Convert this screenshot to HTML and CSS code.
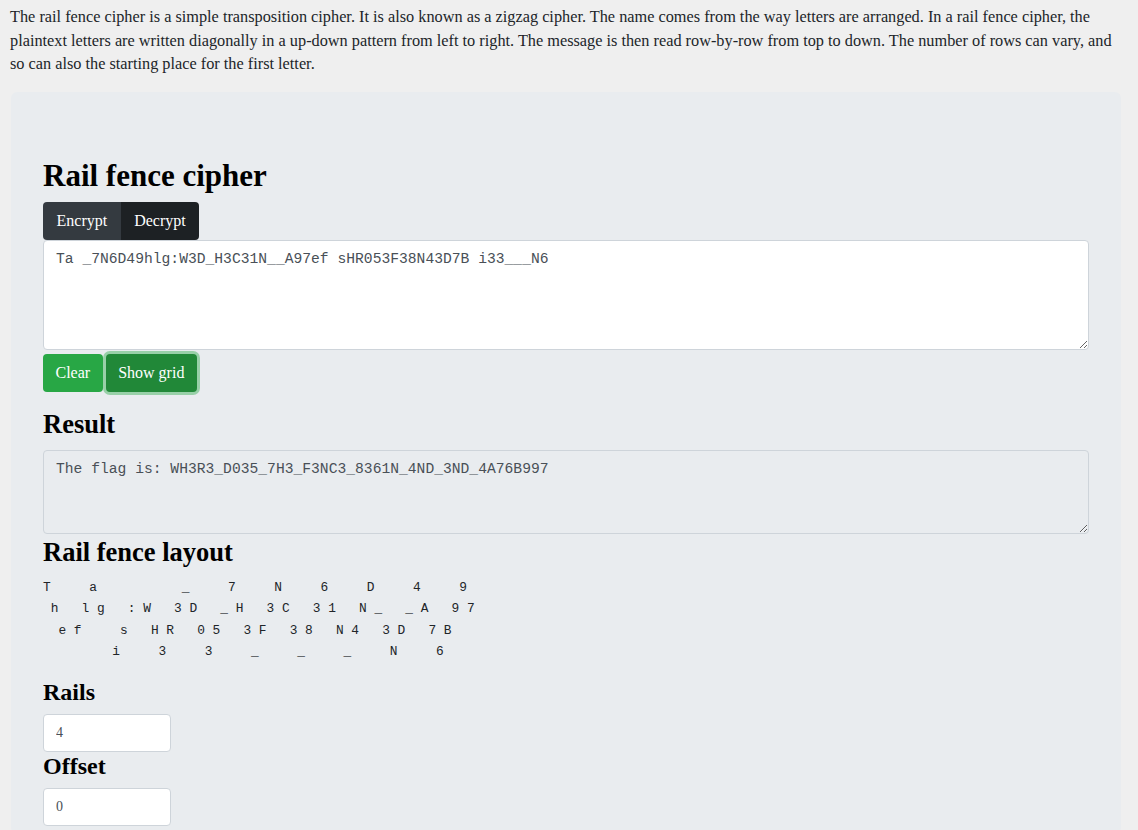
FILE: index.html
```html
<!DOCTYPE html>
<html lang="en">
<head>
<meta charset="utf-8">
<title>Rail fence cipher</title>
<link rel="stylesheet" href="styles.css">
</head>
<body>
<p class="intro">The rail fence cipher is a simple transposition cipher. It is also known as a zigzag cipher. The name comes from the way letters are arranged. In a rail fence cipher, the plaintext letters are written diagonally in a up-down pattern from left to right. The message is then read row-by-row from top to down. The number of rows can vary, and so can also the starting place for the first letter.</p>
<div class="panel">
  <h1 class="title">Rail fence cipher</h1>
  <div class="btn-group">
    <button class="btn btn-dark">Encrypt</button><button class="btn btn-dark active">Decrypt</button>
  </div>
  <textarea class="field" rows="4">Ta _7N6D49hlg:W3D_H3C31N__A97ef sHR053F38N43D7B i33___N6</textarea>
  <div class="actions">
    <button class="btn btn-green">Clear</button>
    <button class="btn btn-green focus">Show grid</button>
  </div>
  <h3 class="sub">Result</h3>
  <textarea class="field result" readonly>The flag is: WH3R3_D035_7H3_F3NC3_8361N_4ND_3ND_4A76B997</textarea>
  <h3 class="sub tight">Rail fence layout</h3>
<pre class="layout">T     a           _     7     N     6     D     4     9
 h   l g   : W   3 D   _ H   3 C   3 1   N _   _ A   9 7
  e f     s   H R   0 5   3 F   3 8   N 4   3 D   7 B
         i     3     3     _     _     _     N     6</pre>
  <h4 class="label">Rails</h4>
  <input class="num" type="text" value="4">
  <h4 class="label">Offset</h4>
  <input class="num" type="text" value="0">
</div>
</body>
</html>
```
FILE: styles.css
```css
html, body {
  margin: 0;
  padding: 0;
}
body {
  background: #efefef;
  color: #212529;
  font-family: "Liberation Serif", "Times New Roman", serif;
  font-size: 16px;
  line-height: 1.5;
  padding: 5px 18px 0 10px;
}
.intro {
  margin: 0 0 16px 0;
  font-size: 16.3px;
  line-height: 23.67px;
}
.panel {
  background: #e9ecef;
  border-radius: 6px;
  margin-left: 1px;
  width: 1046px;
  padding: 64px 32px 8px 32px;
}
.title {
  font-size: 31px;
  font-weight: bold;
  line-height: 40px;
  margin: 0 0 6px 0;
  color: #000;
}
.btn-group {
  display: flex;
}
.btn {
  font-family: "Liberation Serif", "Times New Roman", serif;
  font-size: 16px;
  line-height: 24px;
  padding: 7px 13.5px;
  border: none;
  color: #fff;
  border-radius: 4px;
  cursor: pointer;
}
.btn-dark {
  background: #343a40;
}
.btn-group .btn:first-child {
  border-radius: 4px 0 0 4px;
}
.btn-group .btn:last-child {
  border-radius: 0 4px 4px 0;
}
.btn-dark.active {
  background: #1d2124;
}
.field {
  display: block;
  box-sizing: border-box;
  width: 1046px;
  height: 110px;
  margin: 0;
  padding: 6px 12px;
  border: 1px solid #ced4da;
  border-radius: 4px;
  background: #fff;
  color: #495057;
  font-family: "Liberation Mono", "DejaVu Sans Mono", monospace;
  font-size: 14.67px;
  line-height: 24px;
}
.field.result {
  height: 84px;
  background: #e9ecef;
}
.actions {
  display: flex;
  gap: 3px;
  margin-top: 4px;
}
.btn-green {
  background: #28a745;
  padding-left: 12.5px;
  padding-right: 12.5px;
}
.btn-green.focus {
  background: #218838;
  box-shadow: 0 0 0 3px rgba(72, 180, 97, 0.5);
}
.sub {
  font-size: 26.5px;
  font-weight: bold;
  line-height: 32px;
  margin: 16px 0 10px 0;
  color: #000;
}
.sub.tight {
  margin-top: 2px;
  margin-bottom: 9px;
}
.layout {
  font-family: "Liberation Mono", "DejaVu Sans Mono", monospace;
  font-size: 12.85px;
  line-height: 21.33px;
  margin: 0 0 16px 0;
  color: #212529;
}
.label {
  font-size: 24px;
  font-weight: bold;
  line-height: 28px;
  margin: 0 0 8px 0;
  color: #000;
}
.num {
  display: block;
  box-sizing: border-box;
  width: 128px;
  height: 38px;
  margin: 0;
  padding: 6px 12px;
  border: 1px solid #ced4da;
  border-radius: 4px;
  background: #fff;
  color: #495057;
  font-family: "Liberation Serif", "Times New Roman", serif;
  font-size: 14px;
}
```
